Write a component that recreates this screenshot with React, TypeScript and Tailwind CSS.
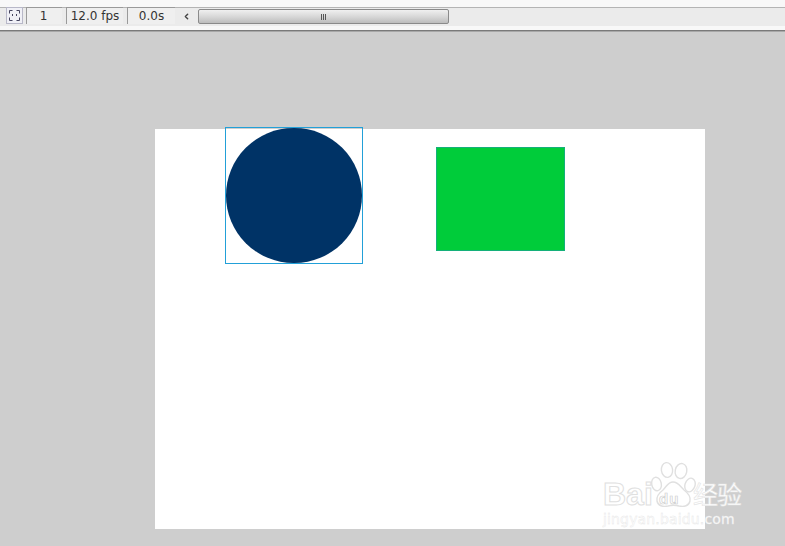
import { ChevronLeft } from "lucide-react"

function Cell({ className, children }: { className: string; children: React.ReactNode }) {
  return (
    <div className={`-mt-px flex h-[17px] items-center justify-center border-t border-l border-[#9a9a9a] border-r-white border-b-white font-['DejaVu_Sans',sans-serif] text-[12px] leading-none text-[#333] ${className}`}>
      {children}
    </div>
  )
}

// Center-frame button glyph: corner brackets with two dots in the middle
function CenterIcon() {
  return (
    <svg width="11" height="11" viewBox="0 0 11 11" fill="none" stroke="#45455f" strokeWidth="1">
      <path d="M3.5 .5H.5V3.5M7.5 .5H10.5V3.5M3.5 10.5H.5V7.5M7.5 10.5H10.5V7.5" />
      <path d="M3 4h1v2H3zM7 4h1v2H7z" fill="#45455f" stroke="none" />
    </svg>
  )
}

// Baidu paw print of the watermark
function Paw() {
  return (
    <svg width="46" height="48" viewBox="0 0 46 48" fill="#ffffff" stroke="#e0e0e0" strokeWidth="1.4" className="absolute left-[47px] top-[1px]">
      <ellipse cx="6.5" cy="23" rx="4.8" ry="6.8" transform="rotate(-12 6.5 23)" />
      <ellipse cx="17" cy="9" rx="5.6" ry="7.4" transform="rotate(-8 17 9)" />
      <ellipse cx="31" cy="10" rx="5.8" ry="7.6" transform="rotate(12 31 10)" />
      <ellipse cx="40" cy="24" rx="5" ry="7" transform="rotate(18 40 24)" />
      <path d="M23 21c-5 0-6 4-10 8-4 3-7 6-6 11 1 5 6 6 11 5 4-1 7-1 11 0 5 1 10 0 11-5 1-5-2-8-6-11-4-4-6-8-11-8z" />
    </svg>
  )
}

export default function App() {
  return (
    <div className="relative h-[546px] w-[785px] overflow-hidden bg-[#cecece] font-['Liberation_Sans',sans-serif]">
      {/* Timeline bar */}
      <div className="h-[32px] border-b border-[#a8a8a8] bg-[#f8f8f8]">
        <div className="h-[31px] border-b-[1px] border-[#7a7a7a] pt-[7px]">
          <div className="flex h-[19px] items-start border-t border-[#b4b4b4] bg-[#ebebeb]">
            <div className="-mt-px ml-[6px] flex h-[17px] w-[17px] items-center justify-center border border-[#b8b8c8] bg-[#f0f0f6]">
              <CenterIcon />
            </div>
            <Cell className="ml-[3px] w-[36px] bg-[#efefef] pr-[2px]">1</Cell>
            <Cell className="ml-[4px] w-[57px] bg-[#efefef]">12.0 fps</Cell>
            <Cell className="ml-[4px] w-[48px] bg-[#efefef]">0.0s</Cell>

            {/* Scrubber */}
            <div className="ml-[4px] flex h-[17px] flex-1 items-center pl-[3px]">
              <ChevronLeft size={9} strokeWidth={4} className="text-[#444]" />
              <div className="ml-[7px] flex h-[15px] w-[251px] items-center justify-center gap-[1px] rounded-[2px] border border-[#8a8a8a] bg-gradient-to-b from-[#f0f0f0] via-[#d8d8d8] to-[#bdbdbd]">
                <div className="h-[6px] w-[1px] bg-[#555]" />
                <div className="h-[6px] w-[1px] bg-[#555]" />
                <div className="h-[6px] w-[1px] bg-[#555]" />
              </div>
            </div>
          </div>
        </div>
      </div>

      {/* Stage */}
      <div className="relative ml-[155px] mt-[97px] h-[400px] w-[550px] bg-white">
        <div className="absolute left-[70px] top-[-2px] h-[137px] w-[138px] border border-[#22a0d8]">
          <div className="h-[135px] w-[136px] rounded-full bg-[#003366]" />
        </div>
        <div className="absolute left-[281px] top-[18px] h-[104px] w-[129px] border border-[#14b07a] bg-[#00cc3a]" />
      </div>

      {/* Watermark */}
      <div className="absolute left-[603px] top-[460px] h-[68px] w-[160px]">
        <span className="absolute left-0 top-[18px] text-[32px] font-bold leading-none text-white [-webkit-text-stroke:1px_#e0e0e0]">Bai</span>
        <Paw />
        <span className="absolute left-[56px] top-[31px] text-[15px] font-bold leading-none tracking-[1px] text-white [-webkit-text-stroke:0.7px_#d0d0d0]">du</span>
        <span className="absolute left-[90px] top-[21px] font-['Noto_Sans_CJK_SC',sans-serif] text-[25px] leading-none tracking-[-1px] text-white [-webkit-text-stroke:0.6px_#e4e4e4]">经验</span>
        <span className="absolute left-0 top-[52px] font-['DejaVu_Sans',sans-serif] text-[14px] leading-none tracking-[0.15px] text-white [-webkit-text-stroke:0.4px_#e6e6e6]">jingyan.baidu.com</span>
      </div>
    </div>
  )
}
